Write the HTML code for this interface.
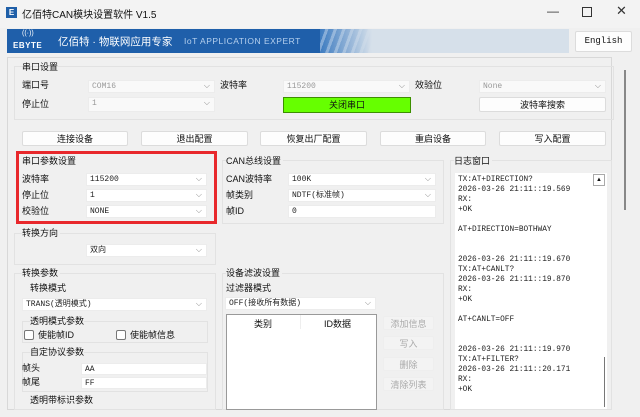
<!DOCTYPE html>
<html><head><meta charset="utf-8"><style>
*{box-sizing:border-box;margin:0;padding:0}
body{width:640px;height:417px;overflow:hidden;background:#f0f0f0;font-family:"Liberation Sans","Noto Sans CJK SC",sans-serif;font-size:9px;color:#111;position:relative}
.a{position:absolute;white-space:nowrap}
.t{position:absolute;white-space:nowrap;font-size:9px;line-height:11px}
.cb{position:absolute;background:#fff;border:1px solid #ececec;font-family:"Liberation Mono","Noto Sans CJK SC",monospace;font-size:8px;line-height:12px;padding-left:3px;color:#222}
.cb.d{color:#999;background:#f9f9f9}
.cb .v{position:absolute;right:4px;top:-1px;color:#888;font-size:8px;font-family:"Liberation Sans",sans-serif}
.bt{position:absolute;background:#fdfdfd;border:1px solid #dcdcdc;border-radius:2px;text-align:center;font-size:9px;line-height:14px}
.grp{position:absolute;border:1px solid #e2e2e2}
.log{position:absolute;left:455px;top:173px;width:152px;height:236px;background:#fff;font-family:"Liberation Mono",monospace;font-size:7.8px;line-height:10px;padding:2px 0 0 3px;color:#222;white-space:pre}
</style></head><body>
<div class="a" style="left:0;top:0;width:640px;height:28px;background:#f3f3f3"></div>
<div class="a" style="left:6px;top:7px;width:11px;height:11px;background:#1f5fa8;color:#fff;font-size:8px;line-height:11px;text-align:center;font-weight:bold">E</div>
<div class="a" style="left:22px;top:6px;font-size:10px">亿佰特CAN模块设置软件 V1.5</div>
<div class="a" style="left:547px;top:4px;font-size:12px;color:#333">—</div>
<div class="a" style="left:582px;top:7px;width:10px;height:10px;border:1px solid #333"></div>
<div class="a" style="left:616px;top:3px;font-size:13px;color:#333">✕</div>
<div class="a" style="left:7px;top:29px;width:562px;height:24px;background:#d6e0ea"></div>
<div class="a" style="left:7px;top:29px;width:314px;height:24px;background:#1f5faa"></div>
<div class="a" style="left:320px;top:29px;width:52px;height:24px;background:repeating-linear-gradient(110deg,#3d7bc0 0,#3d7bc0 5px,#7fa8d6 5px,#7fa8d6 8px)"></div>
<div class="a" style="left:320px;top:29px;width:52px;height:24px;background:linear-gradient(90deg,rgba(214,224,234,0) 0,rgba(214,224,234,0.6) 60%,#d6e0ea 100%)"></div>
<div class="a" style="left:22px;top:30px;color:#fff;font-size:7px">((·))</div>
<div class="a" style="left:13px;top:41px;color:#fff;font-size:8px;font-weight:bold;letter-spacing:0.5px">EBYTE</div>
<div class="a" style="left:58px;top:34px;color:#fff;font-size:10.5px">亿佰特 · 物联网应用专家</div>
<div class="a" style="left:184px;top:36px;color:#b5d0ee;font-size:8.5px;letter-spacing:0.5px">IoT APPLICATION EXPERT</div>
<div class="bt" style="left:575px;top:31px;width:57px;height:21px;line-height:19px;font-family:'Liberation Mono',monospace;font-size:9px">English</div>
<div class="grp" style="left:7px;top:57px;width:605px;height:353px;border-color:#d8d8d8"></div>
<div class="a" style="left:624px;top:70px;width:2px;height:140px;background:#888"></div>
<div class="grp" style="left:14px;top:66px;width:600px;height:54px"></div>
<div class="t" style="left:22px;top:62px">串口设置</div>
<div class="t" style="left:22px;top:80px">端口号</div>
<div class="cb d" style="left:88px;top:80px;width:127px;height:13px">COM16<span class="v">⌵</span></div>
<div class="t" style="left:220px;top:80px">波特率</div>
<div class="cb d" style="left:283px;top:80px;width:127px;height:13px">115200<span class="v">⌵</span></div>
<div class="t" style="left:415px;top:80px">效验位</div>
<div class="cb d" style="left:479px;top:80px;width:127px;height:13px">None<span class="v">⌵</span></div>
<div class="t" style="left:22px;top:99px">停止位</div>
<div class="cb d" style="left:88px;top:97px;width:127px;height:15px">1<span class="v">⌵</span></div>
<div class="bt" style="left:283px;top:97px;width:128px;height:16px;background:#66ff00;border:1px solid #3c8f00;border-radius:0">关闭串口</div>
<div class="bt" style="left:479px;top:97px;width:127px;height:15px">波特率搜索</div>
<div class="bt" style="left:22px;top:131px;width:106px;height:15px">连接设备</div>
<div class="bt" style="left:141px;top:131px;width:107px;height:15px">退出配置</div>
<div class="bt" style="left:260px;top:131px;width:107px;height:15px">恢复出厂配置</div>
<div class="bt" style="left:380px;top:131px;width:106px;height:15px">重启设备</div>
<div class="bt" style="left:499px;top:131px;width:107px;height:15px">写入配置</div>
<div class="a" style="left:16px;top:151px;width:201px;height:73px;border:3px solid #e8282c"></div>
<div class="t" style="left:22px;top:156px">串口参数设置</div>
<div class="t" style="left:22px;top:174px">波特率</div>
<div class="cb" style="left:86px;top:173px;width:121px;height:13px">115200<span class="v">⌵</span></div>
<div class="t" style="left:22px;top:190px">停止位</div>
<div class="cb" style="left:86px;top:189px;width:121px;height:13px">1<span class="v">⌵</span></div>
<div class="t" style="left:22px;top:206px">校验位</div>
<div class="cb" style="left:86px;top:205px;width:121px;height:13px">NONE<span class="v">⌵</span></div>
<div class="grp" style="left:222px;top:160px;width:222px;height:64px"></div>
<div class="t" style="left:226px;top:156px;background:#f0f0f0;padding-right:2px">CAN总线设置</div>
<div class="t" style="left:226px;top:174px">CAN波特率</div>
<div class="cb" style="left:288px;top:173px;width:148px;height:13px">100K<span class="v">⌵</span></div>
<div class="t" style="left:226px;top:190px">帧类别</div>
<div class="cb" style="left:288px;top:189px;width:148px;height:13px">NDTF(标准帧)<span class="v">⌵</span></div>
<div class="t" style="left:226px;top:206px">帧ID</div>
<div class="cb" style="left:288px;top:205px;width:148px;height:13px">0</div>
<div class="grp" style="left:450px;top:160px;width:162px;height:250px"></div>
<div class="t" style="left:454px;top:156px;background:#f0f0f0;padding-right:2px">日志窗口</div>
<div class="log">TX:AT+DIRECTION?
2026-03-26 21:11::19.569
RX:
+OK

AT+DIRECTION=BOTHWAY


2026-03-26 21:11::19.670
TX:AT+CANLT?
2026-03-26 21:11::19.870
RX:
+OK

AT+CANLT=OFF


2026-03-26 21:11::19.970
TX:AT+FILTER?
2026-03-26 21:11::20.171
RX:
+OK</div>
<div class="a" style="left:593px;top:174px;width:12px;height:12px;border:1px solid #aaa;background:#fff;font-size:6px;text-align:center;line-height:10px">▲</div>
<div class="a" style="left:604px;top:357px;width:1px;height:50px;background:#777"></div>
<div class="grp" style="left:14px;top:233px;width:202px;height:32px"></div>
<div class="t" style="left:22px;top:228px;background:#f0f0f0;padding-right:2px">转换方向</div>
<div class="cb" style="left:86px;top:244px;width:121px;height:13px">双向<span class="v">⌵</span></div>
<div class="grp" style="left:14px;top:273px;width:202px;height:137px"></div>
<div class="t" style="left:22px;top:268px;background:#f0f0f0;padding-right:2px">转换参数</div>
<div class="t" style="left:30px;top:283px">转换模式</div>
<div class="cb" style="left:22px;top:298px;width:185px;height:13px">TRANS(透明模式)<span class="v">⌵</span></div>
<div class="grp" style="left:22px;top:321px;width:186px;height:22px"></div>
<div class="t" style="left:30px;top:316px;background:#f0f0f0">透明模式参数</div>
<div class="a" style="left:24px;top:330px;width:10px;height:10px;border:1px solid #777;background:#fff;border-radius:2px"></div>
<div class="t" style="left:38px;top:330px">使能帧ID</div>
<div class="a" style="left:116px;top:330px;width:10px;height:10px;border:1px solid #777;background:#fff;border-radius:2px"></div>
<div class="t" style="left:130px;top:330px">使能帧信息</div>
<div class="grp" style="left:22px;top:352px;width:186px;height:40px"></div>
<div class="t" style="left:30px;top:347px;background:#f0f0f0">自定协议参数</div>
<div class="t" style="left:22px;top:363px">帧头</div>
<div class="cb" style="left:81px;top:363px;width:126px;height:12px;line-height:11px">AA</div>
<div class="t" style="left:22px;top:377px">帧尾</div>
<div class="cb" style="left:81px;top:377px;width:126px;height:12px;line-height:11px">FF</div>
<div class="t" style="left:30px;top:395px">透明带标识参数</div>
<div class="grp" style="left:222px;top:273px;width:222px;height:137px"></div>
<div class="t" style="left:226px;top:268px;background:#f0f0f0;padding-right:2px">设备滤波设置</div>
<div class="t" style="left:226px;top:283px">过滤器模式</div>
<div class="cb" style="left:225px;top:297px;width:151px;height:13px">OFF(接收所有数据)<span class="v">⌵</span></div>
<div class="a" style="left:226px;top:314px;width:151px;height:96px;background:#fff;border:1px solid #999"></div>
<div class="a" style="left:300px;top:315px;width:1px;height:14px;background:#eee"></div>
<div class="t" style="left:254px;top:319px">类别</div>
<div class="t" style="left:324px;top:319px">ID数据</div>
<div class="bt" style="left:383px;top:316px;width:51px;height:14px;color:#aaa;border-color:#eee;background:#f3f3f3">添加信息</div>
<div class="bt" style="left:383px;top:336px;width:51px;height:14px;color:#aaa;border-color:#eee;background:#f3f3f3">写入</div>
<div class="bt" style="left:383px;top:357px;width:51px;height:14px;color:#aaa;border-color:#eee;background:#f3f3f3">删除</div>
<div class="bt" style="left:383px;top:377px;width:51px;height:14px;color:#aaa;border-color:#eee;background:#f3f3f3">清除列表</div>
</body></html>
